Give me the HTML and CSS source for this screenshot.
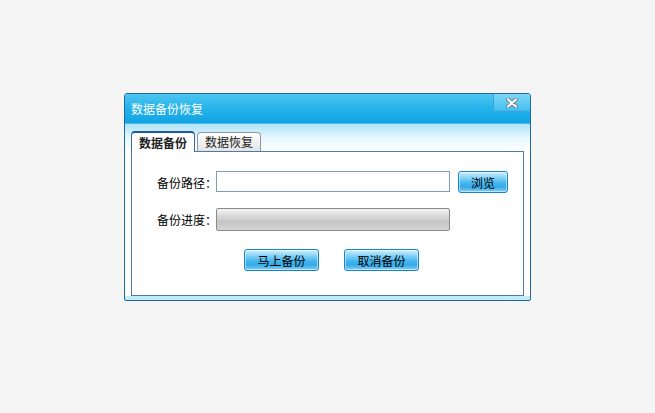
FILE: index.html
```html
<!DOCTYPE html>
<html lang="zh-CN">
<head>
<meta charset="utf-8">
<title>数据备份恢复</title>
<link rel="stylesheet" href="styles.css">
</head>
<body>
<div class="window">
  <div class="titlebar">
    <span class="title">数据备份恢复</span>
    <span class="close">
      <svg width="12" height="10" viewBox="0 0 12 10">
        <path d="M2 1.5 L10 8.5 M10 1.5 L2 8.5" stroke="#6a7f8c" stroke-width="4" stroke-linecap="round"/>
        <path d="M2 1.5 L10 8.5 M10 1.5 L2 8.5" stroke="#ffffff" stroke-width="2.2" stroke-linecap="round"/>
      </svg>
    </span>
  </div>
  <div class="body">
    <div class="tabs">
      <div class="tab active">数据备份</div>
      <div class="tab">数据恢复</div>
    </div>
    <div class="panel">
      <div class="row">
        <span class="label">备份路径：</span>
        <span class="input"></span>
        <span class="btn small">浏览</span>
      </div>
      <div class="row row2">
        <span class="label">备份进度：</span>
        <span class="progress"></span>
      </div>
      <div class="actions">
        <span class="btn">马上备份</span>
        <span class="btn">取消备份</span>
      </div>
    </div>
  </div>
</div>
</body>
</html>
```
FILE: styles.css
```css
html, body {
  margin: 0;
  padding: 0;
  background: #f5f5f5;
  font-family: "Noto Sans CJK SC", "Liberation Sans", sans-serif;
  font-size: 12px;
  color: #000;
}
body {
  padding: 93px 0 0 124px;
}
.window {
  width: 405px;
  height: 206px;
  border: 1px solid #1e6a9e;
  border-radius: 3px 3px 2px 2px;
  background: linear-gradient(to bottom, #ffffff 0, #ffffff 170px, #bfeaf9 206px);
  overflow: hidden;
}
.titlebar {
  height: 29px;
  display: flex;
  align-items: flex-start;
  justify-content: space-between;
  background: linear-gradient(to bottom, #4ec6f0 0, #28b4ec 45%, #10a4e4 100%);
  border-bottom: 1px solid #52b8e6;
}
.title {
  color: #ffffff;
  line-height: 29px;
  padding-left: 6px;
  letter-spacing: 0;
}
.close {
  width: 36px;
  height: 15px;
  display: flex;
  align-items: center;
  justify-content: center;
  border-left: 1px solid #3aa2d6;
  border-bottom: 1px solid #4ab4e4;
  background: linear-gradient(to bottom, #7ed6f6, #48c0f0);
  padding-top: 1px;
}
.body {
  padding: 6px 6px 0 6px;
  background: linear-gradient(to bottom, #aee3f6 0, #e6f7fd 14px, #ffffff 28px);
}
.tabs {
  display: flex;
  align-items: flex-end;
  height: 21px;
  gap: 2px;
}
.tab {
  height: 18px;
  width: 62px;
  line-height: 18px;
  text-align: center;
  border: 1px solid #8c9aa6;
  border-bottom: none;
  border-radius: 4px 4px 0 0;
  background: linear-gradient(to bottom, #ffffff, #e4e4e4);
  color: #222;
}
.tab.active {
  height: 19px;
  width: 62px;
  border: 1px solid #3c6a96;
  border-top: 2px solid #1e5aa0;
  border-bottom: none;
  background: #ffffff;
  font-weight: bold;
  position: relative;
  margin-bottom: -1px;
  z-index: 1;
  line-height: 19px;
}
.panel {
  height: 143px;
  border: 1px solid #4f7ca4;
  background: #ffffff;
  padding-left: 25px;
  box-sizing: content-box;
}
.row {
  display: flex;
  align-items: center;
  margin-top: 19px;
  height: 22px;
}
.row2 {
  margin-top: 15px;
  height: 23px;
}
.label {
  width: 59px;
  white-space: nowrap;
}
.input {
  width: 232px;
  height: 19px;
  border: 1px solid #7f9db9;
  background: #fff;
  align-self: flex-start;
}
.progress {
  width: 232px;
  height: 21px;
  border: 1px solid #8a8a8a;
  border-radius: 2px;
  background: linear-gradient(to bottom, #f4f4f4 0, #d8d8d8 35%, #d0d0d0 50%, #c4c4c4 60%, #d6d6d6 100%);
}
.btn {
  display: inline-flex;
  align-items: center;
  justify-content: center;
  width: 73px;
  height: 20px;
  border: 1px solid #1584cc;
  border-radius: 3px;
  background: linear-gradient(to bottom, #d2f0fd 0, #8ed6f6 25%, #44b6ee 55%, #36aaea 75%, #86d0f4 100%);
  box-shadow: inset 0 0 0 1px rgba(255,255,255,0.5);
  color: #000;
}
.btn.small {
  width: 48px;
  margin-left: 8px;
  align-self: flex-start;
}
.actions {
  display: flex;
  gap: 25px;
  margin-top: 18px;
  padding-left: 87px;
}
```
